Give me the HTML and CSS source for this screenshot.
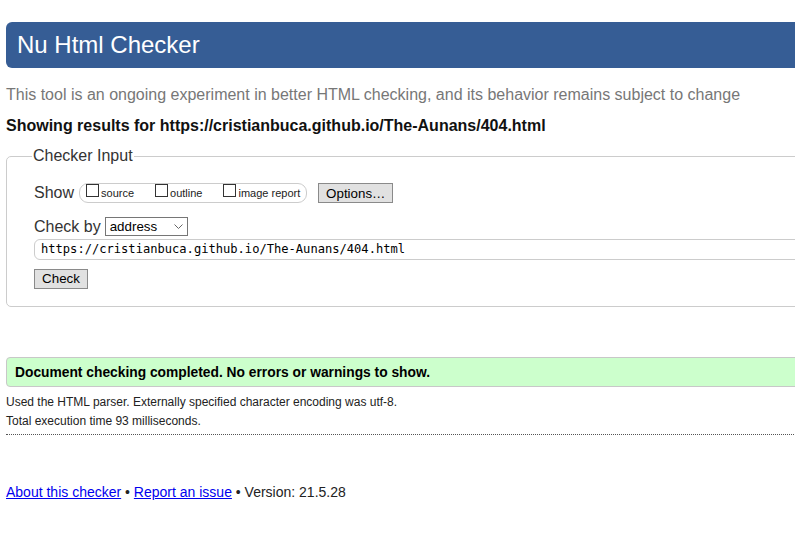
FILE: index.html
```html
<!DOCTYPE html>
<html lang="en">
<head>
<meta charset="utf-8">
<title>Nu Html Checker</title>
<link rel="stylesheet" href="styles.css">
</head>
<body>
<div class="page">
  <h1 class="title">Nu Html Checker</h1>
  <p class="sub">This tool is an ongoing experiment in better HTML checking, and its behavior remains subject to change</p>
  <h2 class="results">Showing results for https://cristianbuca.github.io/The-Aunans/404.html</h2>
  <fieldset class="input">
    <legend class="legend">Checker Input</legend>
    <div class="row show-row">
      <span class="label-text">Show</span>
      <span class="pill">
        <span class="opt"><span class="cb"></span><span class="opt-text">source</span></span>
        <span class="opt"><span class="cb"></span><span class="opt-text">outline</span></span>
        <span class="opt opt-last"><span class="cb"></span><span class="opt-text">image report</span></span>
      </span>
      <span class="btn btn-options">Options…</span>
    </div>
    <div class="row by-row">
      <span class="label-text">Check by</span>
      <span class="select">address
        <svg class="chev" width="9" height="5" viewBox="0 0 9 5"><path d="M0.5 0.5 L4.5 4.5 L8.5 0.5" fill="none" stroke="#666" stroke-width="1"/></svg>
      </span>
    </div>
    <div class="url">https://cristianbuca.github.io/The-Aunans/404.html</div>
    <div class="row check-row"><span class="btn btn-check">Check</span></div>
  </fieldset>
  <div class="success">Document checking completed. No errors or warnings to show.</div>
  <div class="details">
    <p class="meta">Used the HTML parser. Externally specified character encoding was utf-8.</p>
    <p class="meta">Total execution time 93 milliseconds.</p>
  </div>
  <div class="dots"></div>
  <p class="footer"><a href="#">About this checker</a> • <a href="#">Report an issue</a> • Version: 21.5.28</p>
</div>
</body>
</html>
```
FILE: styles.css
```css
html, body {
  margin: 0;
  padding: 0;
  overflow: hidden;
  background: #fff;
}
body {
  font-family: "Liberation Sans", Arial, sans-serif;
  color: #222;
}
.page {
  width: 1100px;
  padding-left: 6px;
  padding-top: 22px;
}
.title {
  margin: 0;
  height: 46px;
  line-height: 46px;
  padding-left: 11px;
  background: #365d95;
  color: #fff;
  font-size: 24px;
  font-weight: normal;
  border-radius: 6px 0 0 6px;
}
.sub {
  margin: 17px 0 0;
  font-size: 16px;
  line-height: 19px;
  color: #777;
}
.results {
  margin: 12px 0 0;
  font-size: 16px;
  line-height: 19px;
  font-weight: bold;
  color: #111;
}
.input {
  margin: 12px 0 0;
  padding: 18px 0 17px 27px;
  border: 1px solid #ccc;
  border-radius: 5px;
  color: #333;
}
.legend {
  padding: 0 1px;
  margin-left: -2px;
  font-size: 16px;
  line-height: 18.4px;
}
.row {
  display: flex;
  align-items: center;
}
.label-text {
  font-size: 16px;
  line-height: 18px;
}
.show-row {
  height: 20px;
}
.pill {
  display: inline-flex;
  align-items: flex-start;
  box-sizing: border-box;
  height: 20px;
  margin-left: 5px;
  padding: 0 6px 0 6px;
  border: 1px solid #ccc;
  border-radius: 9px;
}
.opt {
  display: inline-flex;
  align-items: baseline;
  margin-right: 21px;
  font-size: 11px;
  line-height: 12px;
  color: #222;
}
.opt-last {
  margin-right: 0;
}
.cb {
  display: inline-block;
  box-sizing: border-box;
  width: 13px;
  height: 13px;
  border: 1px solid #333;
  background: #fff;
  margin-right: 2px;
}
.btn {
  display: inline-flex;
  align-items: center;
  justify-content: center;
  box-sizing: border-box;
  height: 20px;
  border: 1px solid #8a8a8a;
  background: #e1e1e1;
  font-size: 13.33px;
  color: #000;
}
.btn-options {
  margin-left: 11px;
  width: 75px;
}
.by-row {
  margin-top: 14px;
  height: 19px;
}
.select {
  display: inline-flex;
  align-items: center;
  box-sizing: border-box;
  width: 83px;
  height: 19px;
  margin-left: 4px;
  padding-left: 4px;
  border: 1px solid #767676;
  font-size: 13.33px;
  color: #000;
}
.chev {
  margin-left: auto;
  margin-right: 4px;
}
.url {
  box-sizing: border-box;
  height: 21px;
  margin-top: 2.5px;
  padding-left: 6px;
  border: 1px solid #ccc;
  border-radius: 6px;
  font-family: "DejaVu Sans Mono", "Liberation Mono", monospace;
  font-size: 12.1px;
  line-height: 19px;
  color: #000;
}
.check-row {
  margin-top: 9px;
}
.btn-check {
  width: 54px;
}
.success {
  margin-top: 50px;
  box-sizing: border-box;
  height: 30px;
  padding-left: 8px;
  line-height: 29px;
  border: 1px solid #c8c8c8;
  border-radius: 4px 0 0 4px;
  background: #ccffcc;
  font-size: 13.8px;
  font-weight: bold;
  color: #000;
}
.details {
  margin-top: 6px;
}
.meta {
  margin: 0;
  font-size: 12px;
  line-height: 18.7px;
  color: #222;
}
.dots {
  margin-top: 4px;
  border-top: 1px dotted #555;
}
.footer {
  margin: 49px 0 0;
  font-size: 14px;
  line-height: 16px;
  color: #222;
}
.footer a {
  color: #0000ee;
}
```
